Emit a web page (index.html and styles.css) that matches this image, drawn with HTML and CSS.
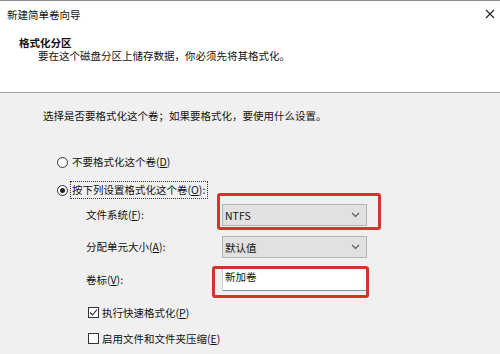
FILE: index.html
```html
<!DOCTYPE html>
<html lang="zh-CN">
<head>
    <meta charset="UTF-8">
    <title>新建简单卷向导</title>
    <link rel="stylesheet" href="styles.css">
</head>
<body>
    <div class="window">
        <div class="header">
            <div class="titlebar">
                <span>新建简单卷向导</span>
                <svg class="close" width="10" height="10" viewBox="0 0 10 10">
                    <path d="M1 1 L9 9 M9 1 L1 9" stroke="#222" stroke-width="1.1" fill="none"/>
                </svg>
            </div>
            <div class="heading">格式化分区</div>
            <div class="subtitle">要在这个磁盘分区上储存数据，你必须先将其格式化。</div>
        </div>
        <div class="content">
            <div class="intro">选择是否要格式化这个卷；如果要格式化，要使用什么设置。</div>

            <div class="option first">
                <span class="radio"></span>
                <span class="option-text">不要格式化这个卷(<u>D</u>)</span>
            </div>
            <div class="option second">
                <span class="radio checked"></span>
                <span class="option-text focused">按下列设置格式化这个卷(<u>O</u>):</span>
            </div>

            <div class="form">
                <div class="form-row">
                    <span class="form-label">文件系统(<u>F</u>):</span>
                    <div class="select">
                        <span>NTFS</span>
                        <svg width="9" height="6" viewBox="0 0 9 6"><path d="M1 1 L4.5 4.5 L8 1" stroke="#555" stroke-width="1.1" fill="none"/></svg>
                    </div>
                </div>
                <div class="form-row">
                    <span class="form-label">分配单元大小(<u>A</u>):</span>
                    <div class="select">
                        <span>默认值</span>
                        <svg width="9" height="6" viewBox="0 0 9 6"><path d="M1 1 L4.5 4.5 L8 1" stroke="#555" stroke-width="1.1" fill="none"/></svg>
                    </div>
                </div>
                <div class="form-row">
                    <span class="form-label">卷标(<u>V</u>):</span>
                    <div class="textbox">新加卷</div>
                </div>
            </div>

            <div class="check first">
                <span class="box">
                    <svg width="9" height="9" viewBox="0 0 9 9"><path d="M1 4.5 L3.5 7 L8 1.5" stroke="#222" stroke-width="1.1" fill="none"/></svg>
                </span>
                <span>执行快速格式化(<u>P</u>)</span>
            </div>
            <div class="check second">
                <span class="box"></span>
                <span>启用文件和文件夹压缩(<u>E</u>)</span>
            </div>
        </div>

        <!-- red annotation boxes -->
        <div class="mark mark-fs"></div>
        <div class="mark mark-label"></div>
    </div>
</body>
</html>
```

FILE: styles.css
```css
body {
    margin: 0;
    background: #f0f0f0;
    font-family: "Noto Sans CJK SC", "Microsoft YaHei", sans-serif;
    font-size: 10.5px;
    color: #111;
}
u {
    text-decoration: underline;
    text-underline-offset: 1px;
}
.window {
    position: relative;
    height: 353px;
    border-top: 1px solid #8c8c8c;
}
.header {
    background: #fff;
    height: 91px;
    border-bottom: 1px solid #a0a0a0;
}
.titlebar {
    display: flex;
    justify-content: space-between;
    align-items: center;
    height: 26px;
    padding: 0 5px 0 7px;
}
.heading {
    margin: 9px 0 0 19px;
    font-weight: bold;
    line-height: 13px;
}
.subtitle {
    margin-left: 38px;
    line-height: 14px;
}
.content {
    padding: 16px 0 0 0;
}
.intro {
    margin-left: 43px;
    line-height: 14px;
}
.option {
    display: flex;
    align-items: center;
    height: 16px;
    margin-left: 57px;
}
.option.first {
    margin-top: 31px;
}
.option.second {
    margin-top: 12px;
}
.radio {
    width: 9px;
    height: 9px;
    border: 1px solid #333;
    border-radius: 50%;
    background: #fff;
    margin-right: 3px;
    display: flex;
    align-items: center;
    justify-content: center;
}
.radio.checked::after {
    content: "";
    width: 5px;
    height: 5px;
    border-radius: 50%;
    background: #222;
}
.option-text {
    line-height: 14px;
    padding: 1px 1px;
}
.option-text.focused {
    outline: 1px dotted #333;
    outline-offset: 0;
    padding: 1px 2px 1px 1px;
}
.form {
    margin: 6px 0 0 86px;
    display: flex;
    flex-direction: column;
    gap: 10px;
}
.form-row {
    display: flex;
    align-items: center;
}
.form-label {
    width: 136px;
    line-height: 14px;
}
.select {
    box-sizing: border-box;
    width: 145px;
    height: 22px;
    background: #e1e1e1;
    border: 1px solid #b4b4b4;
    display: flex;
    align-items: center;
    justify-content: space-between;
    padding: 0 6px 0 2px;
}
.textbox {
    box-sizing: border-box;
    width: 145px;
    height: 23px;
    background: #fff;
    border: 1px solid #d0d0d0;
    border-bottom-color: #8a8aa0;
    padding: 1px 2px;
    line-height: 14px;
}
.check {
    display: flex;
    align-items: center;
    height: 14px;
    margin-left: 88px;
}
.check.first {
    margin-top: 14px;
}
.check.second {
    margin-top: 12px;
}
.box {
    box-sizing: border-box;
    width: 11px;
    height: 11px;
    border: 1px solid #333;
    background: #fff;
    margin-right: 3px;
    display: flex;
    align-items: center;
    justify-content: center;
}
.mark {
    position: absolute;
    border: 3px solid #d3342b;
    border-radius: 3px;
    box-sizing: border-box;
}
.mark-fs {
    left: 217px;
    top: 192px;
    width: 164px;
    height: 37px;
}
.mark-label {
    left: 212px;
    top: 265px;
    width: 157px;
    height: 32px;
}
```
